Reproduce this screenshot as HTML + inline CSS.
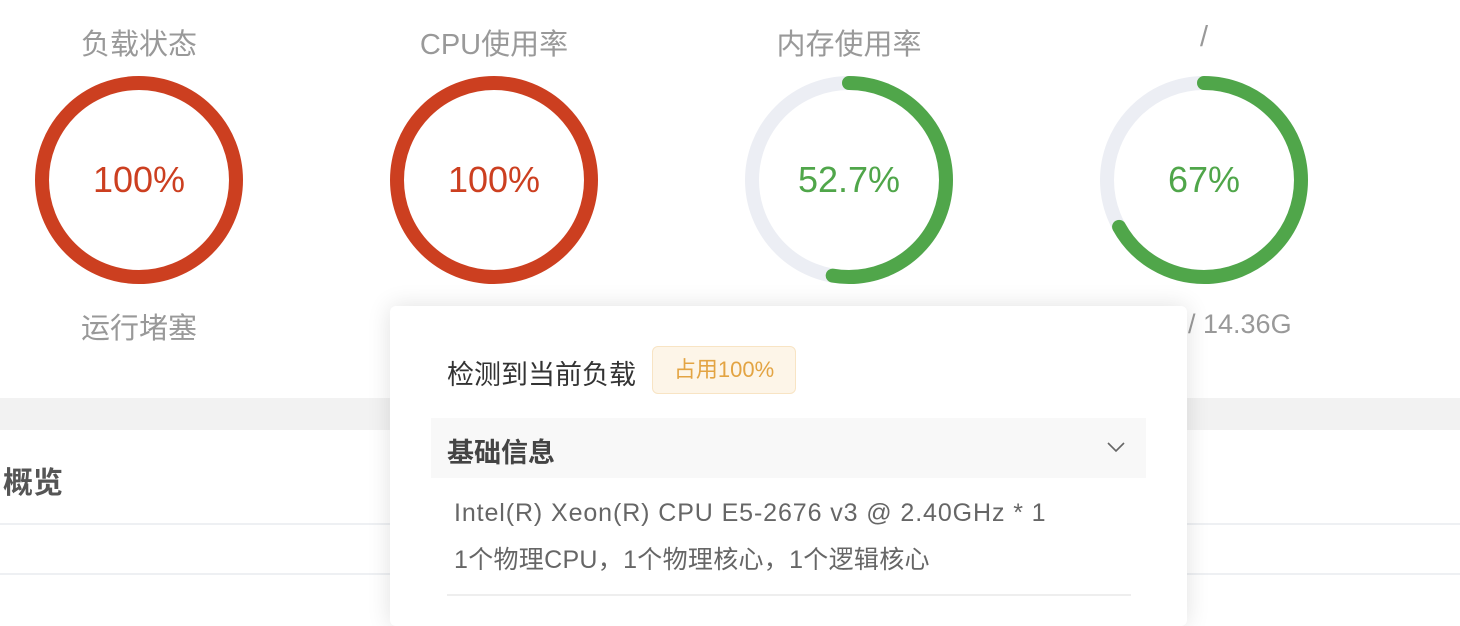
<!DOCTYPE html>
<html><head><meta charset="utf-8"><style>
*{margin:0;padding:0;box-sizing:border-box}
body{width:1460px;height:612px;background:#fff;font-family:"Liberation Sans","Noto Sans CJK SC",sans-serif;position:relative;overflow:hidden}
.t{position:absolute;width:300px;text-align:center;color:#999;font-size:29px}
.band{position:absolute;left:0;top:398px;width:1460px;height:32px;background:#f2f2f2}
.line{position:absolute;left:0;width:1460px;height:2px;background:#eef0f3}
.pop{position:absolute;left:390px;top:306px;width:797px;height:320px;background:#fff;border-radius:6px;box-shadow:0 0 24px rgba(0,0,0,.12)}
</style></head><body>
<div class="t" style="left:-11px;top:21px">负载状态</div>
<div class="t" style="left:344px;top:21px">CPU使用率</div>
<div class="t" style="left:699px;top:21px">内存使用率</div>
<div class="t" style="left:1054px;top:21px">/</div>
<svg style="position:absolute;left:0;top:0" width="1460" height="300">
<circle cx="139" cy="180" r="97" fill="none" stroke="#cc3f20" stroke-width="14"/>
<circle cx="494" cy="180" r="97" fill="none" stroke="#cc3f20" stroke-width="14"/>
<circle cx="849" cy="180" r="97" fill="none" stroke="#eceef4" stroke-width="14"/>
<circle cx="849" cy="180" r="97" fill="none" stroke="#50a64a" stroke-width="14" stroke-linecap="round" stroke-dasharray="321 1000" transform="rotate(-90 849 180)"/>
<circle cx="1204" cy="180" r="97" fill="none" stroke="#eceef4" stroke-width="14"/>
<circle cx="1204" cy="180" r="97" fill="none" stroke="#50a64a" stroke-width="14" stroke-linecap="round" stroke-dasharray="408 1000" transform="rotate(-90 1204 180)"/>
<text x="139" y="192" text-anchor="middle" font-size="36" fill="#cc3f20" font-family="Liberation Sans">100%</text>
<text x="494" y="192" text-anchor="middle" font-size="36" fill="#cc3f20" font-family="Liberation Sans">100%</text>
<text x="849" y="192" text-anchor="middle" font-size="36" fill="#50a64a" font-family="Liberation Sans">52.7%</text>
<text x="1204" y="192" text-anchor="middle" font-size="36" fill="#50a64a" font-family="Liberation Sans">67%</text>
</svg>
<div class="t" style="left:-11px;top:305px">运行堵塞</div>
<div style="position:absolute;left:1188px;top:309px;color:#999;font-size:27px">/ 14.36G</div>
<div class="band"></div>
<div style="position:absolute;left:3px;top:458px;font-size:30px;font-weight:bold;color:#555">概览</div>
<div class="line" style="top:523px"></div>
<div class="line" style="top:573px"></div>
<div class="pop">
<div style="position:absolute;left:57px;top:47px;font-size:27px;color:#333">检测到当前负载</div>
<div style="position:absolute;left:262px;top:40px;width:144px;height:48px;background:#fdf5e8;border:1px solid #f8e4c4;border-radius:6px;color:#e3a443;font-size:22px;line-height:46px;text-align:center">占用100%</div>
<div style="position:absolute;left:41px;top:112px;width:715px;height:60px;background:#f8f8f8"></div>
<div style="position:absolute;left:57px;top:125px;font-size:27px;font-weight:bold;color:#444">基础信息</div>
<svg style="position:absolute;left:716px;top:134px" width="20" height="14"><path d="M2 3 L10 11 L18 3" fill="none" stroke="#666" stroke-width="1.6"/></svg>
<div style="position:absolute;left:64px;top:193px;font-size:25px;letter-spacing:0.9px;color:#666">Intel(R) Xeon(R) CPU E5-2676 v3 @ 2.40GHz * 1</div>
<div style="position:absolute;left:64px;top:234px;font-size:25px;letter-spacing:0.3px;color:#666">1个物理CPU，1个物理核心，1个逻辑核心</div>
<div style="position:absolute;left:57px;top:288px;width:684px;height:2px;background:#eee"></div>
</div>
</body></html>
